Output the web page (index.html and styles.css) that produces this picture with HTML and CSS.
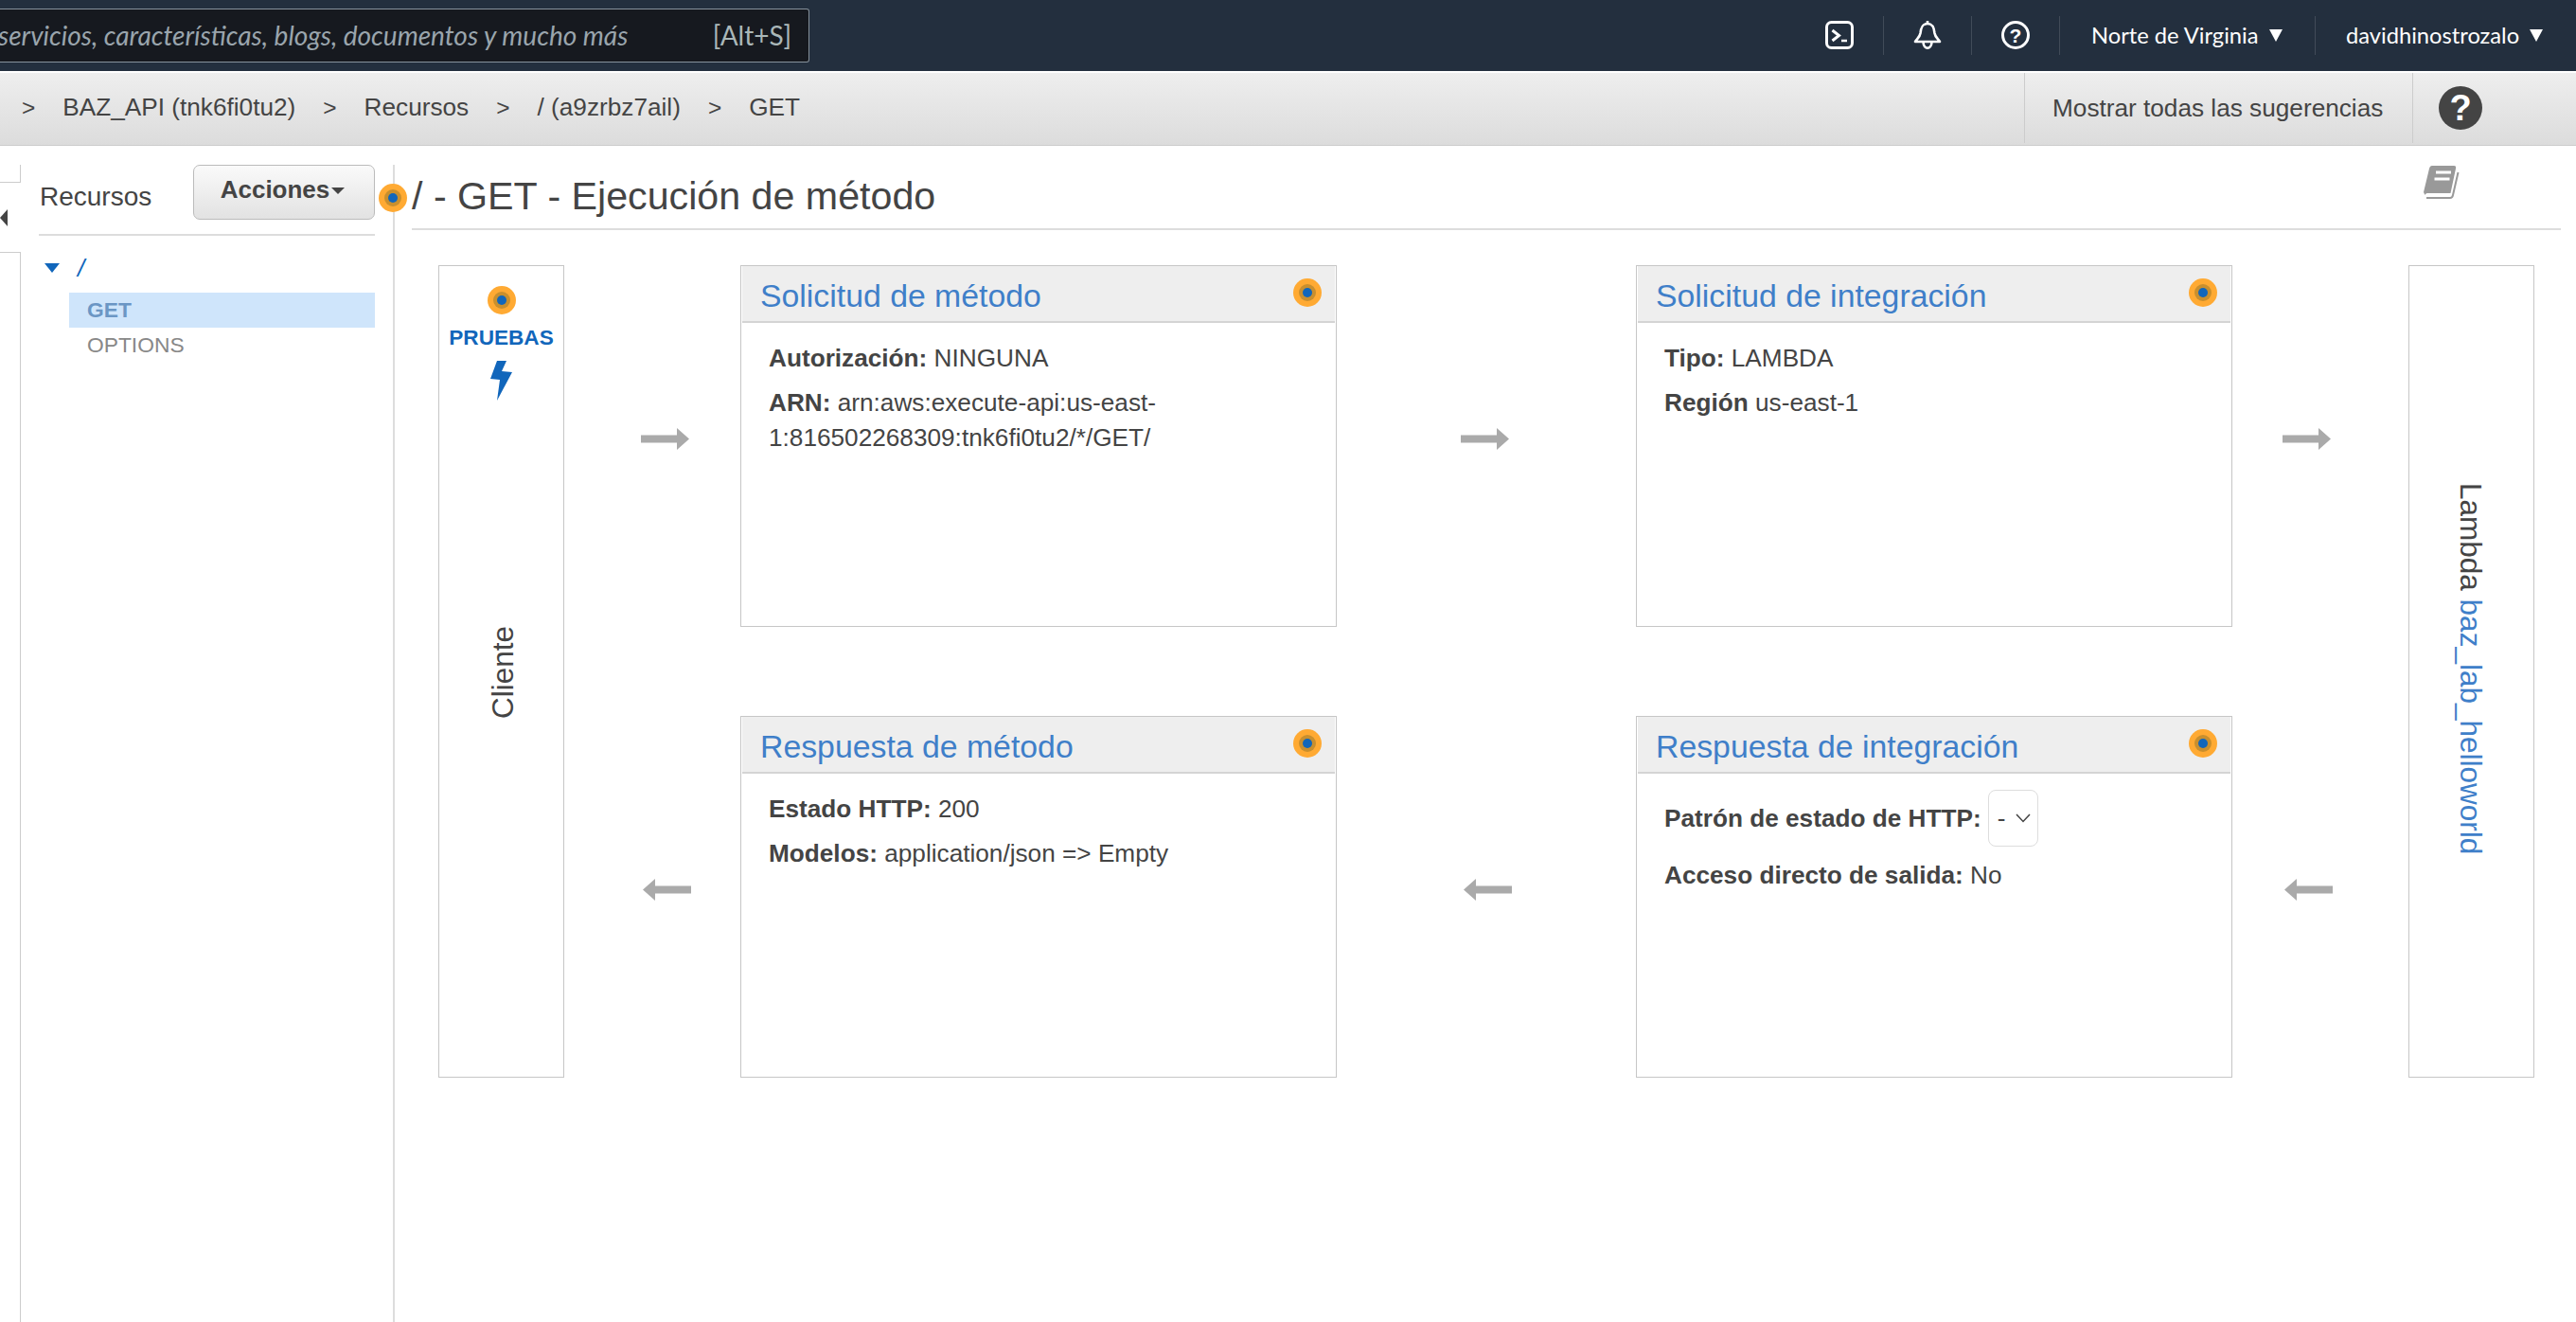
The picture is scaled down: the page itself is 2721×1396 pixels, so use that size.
FILE: index.html
```html
<!DOCTYPE html>
<html lang="es">
<head>
  <meta charset="UTF-8" />
  <title>API Gateway</title>
  <link rel="stylesheet" href="styles.css">
</head>
<body>

  <header class="topbar">
    <div class="search">
      <span class="search-text">servicios, características, blogs, documentos y mucho más</span>
      <span class="search-key">[Alt+S]</span>
    </div>
    <div class="topnav">
      <div class="topnav-item icon-item">
        <svg width="30" height="30" viewBox="0 0 30 30" fill="none" stroke="#fff"><rect x="1.500" y="1.500" width="27" height="27" rx="5" stroke-width="3"/><path d="M7.500 10l7 5.500-7 5.500" stroke-width="3"/><path d="M17 21h6" stroke-width="2.500"/></svg>
      </div>
      <div class="topnav-item icon-item">
        <svg width="30" height="30" viewBox="0 0 30 30" fill="none" stroke="#fff" stroke-width="2.600"><path d="M15 0v3"/><path d="M15 3C9 3 8 8 7.500 13 7 17 4 19 2 22h26c-2-3-5-5-5.500-9C22 8 21 3 15 3z" stroke-linejoin="round"/><path d="M10.500 22c0 9 9 9 9 0"/></svg>
      </div>
      <div class="topnav-item icon-item">
        <svg width="30" height="30" viewBox="0 0 30 30"><circle cx="15" cy="15" r="13.500" fill="none" stroke="#fff" stroke-width="3"/><text x="15" y="23" text-anchor="middle" class="help-mark">?</text></svg>
      </div>
      <div class="topnav-item region">Norte de Virginia<span class="caret"></span></div>
      <div class="topnav-item user">davidhinostrozalo<span class="caret"></span></div>
    </div>
  </header>

  <nav class="crumbs">
    <div class="crumb-path">
      <span class="sep first">&gt;</span><span>BAZ_API (tnk6fi0tu2)</span>
      <span class="sep">&gt;</span><span>Recursos</span>
      <span class="sep">&gt;</span><span>/ (a9zrbz7ail)</span>
      <span class="sep">&gt;</span><span>GET</span>
    </div>
    <div class="crumb-tips">Mostrar todas las sugerencias</div>
    <div class="crumb-help">
      <svg width="46" height="46" viewBox="0 0 46 46"><circle cx="23" cy="23" r="23" fill="#444"/><text x="23" y="36" text-anchor="middle" class="help-big">?</text></svg>
    </div>
  </nav>

  <div class="workspace">
    <div class="strip">
      <div class="strip-top"></div>
      <div class="strip-toggle"><span class="strip-arrow"></span></div>
      <div class="strip-rest"></div>
    </div>

    <aside class="resources">
      <div class="resources-head">
        <span class="resources-title">Recursos</span>
        <button class="actions">Acciones<span class="actions-caret"></span></button>
      </div>
      <div class="tree-root"><span class="tree-arrow"></span><span class="tree-slash">/</span></div>
      <div class="tree-item selected">GET</div>
      <div class="tree-item">OPTIONS</div>
    </aside>

    <main class="method">
      <span class="dot dot-title"><span></span></span>
      <div class="method-head">
        <h2>/ - GET - Ejecución de método</h2>
        <svg class="book" width="38" height="36" viewBox="0 0 38 36"><path d="M9 0h23c2 0 2.500 1 2 3l-5.500 26H5c-2 0-3 .500-3.500 2L0 28 6 3c.500-2 1.500-3 3-3z" fill="#999"/><path d="M36.500 7L31 31c-.300 1.500-1 3-3 3H3" fill="none" stroke="#999" stroke-width="2"/><path d="M13 7h16M11.500 14h16" stroke="#fff" stroke-width="3"/></svg>
      </div>

      <div class="flow">
        <div class="side client">
          <span class="dot"><span></span></span>
          <span class="test-label">PRUEBAS</span>
          <svg class="bolt" width="24" height="42" viewBox="0 0 24 42"><path d="M7 0h10l-5 11 11 1-16 30 3-22-10-1z" fill="#1166bb"/></svg>
          <span class="client-name">Cliente</span>
        </div>

        <div class="arrow a1"><svg width="51" height="23" viewBox="0 0 51 23"><path d="M0 7.500h38V0l13 11.500L38 23v-7.500H0z" fill="#aaa"/></svg></div>

        <section class="card c1">
          <div class="card-head"><a>Solicitud de método</a><span class="dot"><span></span></span></div>
          <div class="card-body">
            <p><b>Autorización:</b> NINGUNA</p>
            <p><b>ARN:</b> arn:aws:execute-api:us-east-<br>1:816502268309:tnk6fi0tu2/*/GET/</p>
          </div>
        </section>

        <div class="arrow a2"><svg width="51" height="23" viewBox="0 0 51 23"><path d="M0 7.500h38V0l13 11.500L38 23v-7.500H0z" fill="#aaa"/></svg></div>

        <section class="card c2">
          <div class="card-head"><a>Solicitud de integración</a><span class="dot"><span></span></span></div>
          <div class="card-body">
            <p><b>Tipo:</b> LAMBDA</p>
            <p><b>Región</b> us-east-1</p>
          </div>
        </section>

        <div class="arrow a3"><svg width="51" height="23" viewBox="0 0 51 23"><path d="M0 7.500h38V0l13 11.500L38 23v-7.500H0z" fill="#aaa"/></svg></div>

        <div class="side lambda"><span class="lambda-name">Lambda <a>baz_lab_helloworld</a></span></div>

        <div class="arrow a4"><svg width="51" height="23" viewBox="0 0 51 23"><path d="M51 7.500H13V0L0 11.500 13 23v-7.500h38z" fill="#aaa"/></svg></div>

        <section class="card c3">
          <div class="card-head"><a>Respuesta de método</a><span class="dot"><span></span></span></div>
          <div class="card-body">
            <p><b>Estado HTTP:</b> 200</p>
            <p><b>Modelos:</b> application/json =&gt; Empty</p>
          </div>
        </section>

        <div class="arrow a5"><svg width="51" height="23" viewBox="0 0 51 23"><path d="M51 7.500H13V0L0 11.500 13 23v-7.500h38z" fill="#aaa"/></svg></div>

        <section class="card c4">
          <div class="card-head"><a>Respuesta de integración</a><span class="dot"><span></span></span></div>
          <div class="card-body tight">
            <div class="status-row"><b>Patrón de estado de HTTP:</b>
              <div class="status-select">-<svg width="16" height="10" viewBox="0 0 16 10" fill="none" stroke="#444" stroke-width="1.500"><path d="M1 1l7 7.500L15 1"/></svg></div>
            </div>
            <p><b>Acceso directo de salida:</b> No</p>
          </div>
        </section>

        <div class="arrow a6"><svg width="51" height="23" viewBox="0 0 51 23"><path d="M51 7.500H13V0L0 11.500 13 23v-7.500h38z" fill="#aaa"/></svg></div>
      </div>
    </main>
  </div>

</body>
</html>
```

FILE: styles.css
```css
* { box-sizing: border-box; }
html, body { height: 100%; }
body {
  margin: 0;
  overflow: hidden;
  background: #fff;
  color: #444;
  font-family: "Liberation Sans", Arial, sans-serif;
  font-size: 26.200px;
  display: flex;
  flex-direction: column;
}
a { color: #3f7fc9; }

/* top bar */
.topbar {
  flex: none;
  height: 75px;
  background: #232f3e;
  display: flex;
  align-items: center;
  justify-content: space-between;
  padding-bottom: 1px;
}
.search {
  width: 855px;
  height: 57px;
  background: #16191f;
  border: 1px solid #87929c;
  border-left: none;
  border-radius: 0 3px 3px 0;
  display: flex;
  align-items: center;
  justify-content: space-between;
  padding-right: 18px;
  color: #9aa5ad;
  font-family: Lato, sans-serif;
  font-size: 28px;
  white-space: nowrap;
}
.search-text { font-style: italic; margin-left: -2px; }
.search-key { color: #aab7b8; }
.topnav {
  display: flex;
  align-items: center;
  height: 41px;
  color: #fff;
  font-family: Lato, sans-serif;
  font-size: 23.700px;
  white-space: nowrap;
}
.topnav-item {
  height: 41px;
  display: flex;
  align-items: center;
  border-right: 1px solid #414b58;
}
.icon-item {
  width: 93px;
  justify-content: center;
}
.region { width: 270px; padding-left: 33px; }
.user { width: 275px; padding-left: 32px; border-right: none; }
.caret {
  margin-left: 11px;
  width: 0;
  height: 0;
  border-left: 7.500px solid transparent;
  border-right: 7.500px solid transparent;
  border-top: 13px solid #fff;
}
.help-mark { font: bold 21px "Liberation Sans", sans-serif; fill: #fff; }
.help-big { font: bold 38px "Liberation Sans", sans-serif; fill: #fff; }

/* breadcrumb */
.crumbs {
  flex: none;
  height: 77px;
  margin-top: 2px;
  background: linear-gradient(#eeeeee, #dcdcdc);
  border-bottom: 1px solid #ccc;
  display: flex;
  align-items: stretch;
  white-space: nowrap;
}
.crumb-path {
  flex: 1;
  display: flex;
  align-items: center;
  padding-left: 23px;
  margin-bottom: 3px;
}
.sep { margin: 0 29px; font-size: 24.500px; }
.sep.first { margin: 0 29px 0 0; }
.crumb-tips {
  width: 410px;
  border-left: 1px solid #ccc;
  padding-left: 29px;
  display: flex;
  align-items: center;
  margin-bottom: 2px;
}
.crumb-help {
  width: 173px;
  border-left: 1px solid #ccc;
  padding-left: 27px;
  display: flex;
  align-items: center;
  margin-bottom: 2px;
}

/* workspace */
.workspace {
  flex: 1;
  display: flex;
  margin-top: 20px;
  min-height: 0;
}
.strip {
  width: 22px;
  flex: none;
  display: flex;
  flex-direction: column;
}
.strip-top {
  height: 19px;
  border-right: 1px solid #ccc;
  border-bottom: 1px solid #ccc;
}
.strip-toggle {
  height: 73px;
  display: flex;
  align-items: center;
}
.strip-arrow {
  width: 0;
  height: 0;
  border-top: 9px solid transparent;
  border-bottom: 9px solid transparent;
  border-right: 8px solid #444;
}
.strip-rest {
  flex: 1;
  border-right: 1px solid #ccc;
  border-top: 1px solid #ccc;
}

/* resource tree */
.resources {
  width: 374px;
  flex: none;
  padding-left: 19px;
  margin-right: 19px;
}
.resources-head {
  display: flex;
  align-items: flex-start;
  justify-content: space-between;
  height: 75px;
  border-bottom: 2px solid #ddd;
}
.resources-title {
  font-size: 28px;
  margin-top: 18px;
  margin-left: 1px;
}
.actions {
  width: 192px;
  height: 58px;
  border: 1px solid #bbb;
  border-radius: 7px;
  background: linear-gradient(#fafafa, #e2e2e2);
  color: #444;
  font: bold 26px "Liberation Sans", sans-serif;
  padding: 0 3px 6px 0;
}
.actions-caret {
  display: inline-block;
  margin-left: 2px;
  vertical-align: middle;
  width: 0;
  height: 0;
  border-left: 7px solid transparent;
  border-right: 7px solid transparent;
  border-top: 7px solid #444;
}
.tree-root {
  height: 60px;
  display: flex;
  align-items: center;
  padding-left: 6px;
  color: #1166bb;
  padding-top: 8px;
}
.tree-arrow {
  width: 0;
  height: 0;
  border-left: 8px solid transparent;
  border-right: 8px solid transparent;
  border-top: 10px solid #1166bb;
}
.tree-slash { margin-left: 19px; font-style: italic; }
.tree-item {
  margin-left: 32px;
  height: 37px;
  padding-left: 19px;
  line-height: 37px;
  font-size: 22.800px;
  color: #888;
}
.tree-item.selected {
  background: #cfe5fb;
  color: #6b96c4;
  font-weight: bold;
}

/* method execution */
.method {
  flex: 1;
  position: relative;
  border-left: 2px solid #ddd;
  min-width: 0;
}
.dot {
  flex: none;
  width: 30px;
  height: 30px;
  border-radius: 50%;
  background: #ffaa33;
  display: flex;
  align-items: center;
  justify-content: center;
}
.dot span {
  display: block;
  width: 10px;
  height: 10px;
  border-radius: 50%;
  background: #1166bb;
  box-shadow: 0 0 0 4px #c98f2e;
}
.dot-title {
  position: absolute;
  left: -17px;
  top: 20px;
}
.method-head {
  margin-left: 18px;
  margin-right: 16px;
  height: 69px;
  border-bottom: 2px solid #ddd;
  display: flex;
  justify-content: space-between;
  align-items: flex-start;
}
h2 {
  margin: 0;
  padding-top: 10px;
  font-size: 41.200px;
  font-weight: normal;
  color: #444;
  white-space: nowrap;
}
.book { margin: 1px 107px 0 0; }

.flow {
  margin: 37px 0 0 46px;
  display: grid;
  grid-template-columns: 133px 186px 630px 316px 630px 186px 133px;
  grid-template-rows: 382px 94px 382px;
}
.side {
  grid-row: 1 / 4;
  border: 1px solid #c6c6c6;
  display: flex;
  flex-direction: column;
  align-items: center;
}
.client { grid-column: 1; padding-top: 21px; }
.lambda { grid-column: 7; justify-content: center; font-size: 31.500px; padding: 0 3px 5px 0; }
.test-label {
  margin-top: 12px;
  color: #1166bb;
  font-weight: bold;
  font-size: 22.600px;
}
.bolt { margin-top: 11px; }
.client-name {
  writing-mode: vertical-rl;
  transform: rotate(180deg);
  font-size: 31.500px;
  margin-top: 238px;
  margin-left: 3px;
}
.lambda-name { writing-mode: vertical-rl; white-space: nowrap; }

.arrow { align-self: center; margin-bottom: 15px; line-height: 0; }
.a1 { grid-column: 2; grid-row: 1; margin-left: 81px; }
.a2 { grid-column: 4; grid-row: 1; margin-left: 131px; }
.a3 { grid-column: 6; grid-row: 1; margin-left: 53px; }
.a4 { grid-column: 2; grid-row: 3; margin-left: 83px; }
.a5 { grid-column: 4; grid-row: 3; margin-left: 134px; }
.a6 { grid-column: 6; grid-row: 3; margin-left: 55px; }

.card { border: 1px solid #c6c6c6; padding: 0 1px; }
.c1 { grid-column: 3; grid-row: 1; }
.c2 { grid-column: 5; grid-row: 1; }
.c3 { grid-column: 3; grid-row: 3; }
.c4 { grid-column: 5; grid-row: 3; }
.card-head {
  height: 60px;
  background: #eee;
  border-bottom: 2px solid #d4d4d4;
  display: flex;
  justify-content: space-between;
  align-items: flex-start;
  padding: 12px 14px 0 19px;
  font-size: 33.800px;
}
.card-head .dot { margin-top: 1px; }
.card-body { padding: 19px 28px; }
.card-body p {
  margin: 0 0 10px;
  line-height: 37px;
}
.card-body.tight { padding-top: 17px; }
.status-row {
  display: flex;
  align-items: center;
  gap: 7px;
  margin-bottom: 12px;
}
.status-select {
  width: 53px;
  height: 60px;
  border: 1px solid #ddd;
  border-radius: 8px;
  display: flex;
  align-items: center;
  gap: 11px;
  padding-left: 9px;
}
```
